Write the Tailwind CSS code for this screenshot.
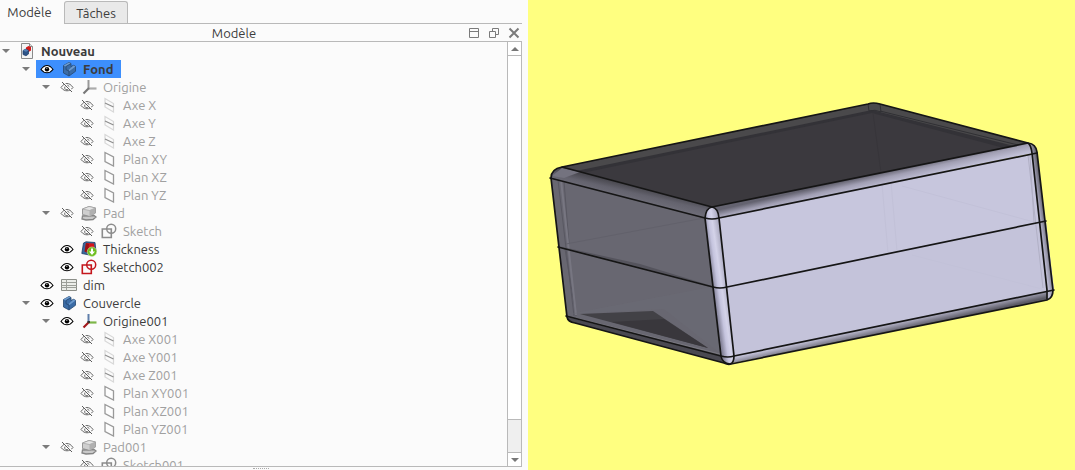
<!DOCTYPE html>
<html lang="fr">

<head>
  <meta charset="UTF-8">
  <meta name="viewport" content="width=device-width, initial-scale=1.0">
  <title>Modèle</title>
  <script src="https://cdn.jsdelivr.net/npm/@tailwindcss/browser@4"></script>
</head>

<body class="flex h-screen overflow-hidden bg-[#fbfbfb] font-['Ubuntu','Noto_Sans',sans-serif] text-[13px] leading-[18px] text-[#3c3c3c]">

  <!-- Icônes -->
  <svg class="hidden">
    <symbol id="eye" viewBox="0 0 14 12">
      <path d="M1 6.500C3 3.500 5 2.500 7 2.500s4 1 6 4C11 9 9 9.800 7 9.800S3 9 1 6.500z" fill="#fff" stroke="#000" stroke-width="1.100" />
      <circle cx="7" cy="6.200" r="2.200" fill="#000" />
      <path d="M6.200 5.300h1.200" stroke="#fff" stroke-width=".8" />
    </symbol>
    <symbol id="eye-off" viewBox="0 0 14 12">
      <path d="M1 6.500C3 3.500 5 2.500 7 2.500s4 1 6 4C11 9 9 9.800 7 9.800S3 9 1 6.500z" fill="none" stroke="#6a6a6a" />
      <path d="M5 5.500a2 2 0 0 0 3.500 2.300M7 4.200a2 2 0 0 1 2 2" fill="none" stroke="#6a6a6a" />
      <path d="M3 1l10 10" stroke="#fbfbfb" stroke-width="1.200" />
      <path d="M2 1l10 10" stroke="#5c5c5c" />
    </symbol>
    <symbol id="doc" viewBox="0 0 16 16">
      <path d="M2.500.5h8l3 3v12h-11z" fill="#f4f4f4" stroke="#8a8a8a" />
      <path d="M10.500.5v3h3" fill="#ddd" stroke="#8a8a8a" />
      <path d="M7 4.500l2.500-1.500 2.500 1v3.500l-2.500 1.500L7 7.500z" fill="#d21919" />
      <path d="M4 7.500L7 6l2.500 1.500V11L7 12.800 4 11.500z" fill="#2d5488" stroke="#1c3b66" stroke-width=".7" />
      <path d="M4 7.500l3 1.300 2.500-1.300L7 6z" fill="#5480b5" />
    </symbol>
    <symbol id="body" viewBox="0 0 16 16">
      <path d="M2.500 4.500L8 1.500l2 1v3l2.500-1.200 2 1v5L8 15l-5.500-3z" fill="#3b6ca6" stroke="#24466f" stroke-width=".8" />
      <path d="M2.500 4.500L8 1.500l2 1L5 5.500zM7.500 9l5-4.500 2 1L8.500 10z" fill="#6e9cce" />
      <path d="M5 5.500v3.200L8 10v5M5 5.500l5-3" fill="none" stroke="#24466f" stroke-width=".8" />
    </symbol>
    <symbol id="origin" viewBox="0 0 16 16">
      <path d="M7.500 1v8" stroke="#5f7fab" stroke-width="2" />
      <path d="M8 9.500h7.500" stroke="#7db648" stroke-width="2.200" />
      <path d="M8 9l-5.500 5.500" stroke="#a3181c" stroke-width="2.200" />
      <path d="M6.500 9h2.500" stroke="#333" stroke-width="2" />
    </symbol>
    <symbol id="origin-off" viewBox="0 0 16 16">
      <path d="M7.500 1v8" stroke="#999" stroke-width="2" />
      <path d="M8 9.500h7.500" stroke="#ababab" stroke-width="2.200" />
      <path d="M8 9l-5.500 5.500" stroke="#777" stroke-width="2.200" />
    </symbol>
    <symbol id="axis" viewBox="0 0 16 16">
      <path d="M4 1.500l8.500 5v8.500L4 10z" fill="none" stroke="#d8d8d8" stroke-width="1.200" />
      <path d="M4 6l8.500 4" stroke="#8c8c8c" stroke-width="1.200" />
    </symbol>
    <symbol id="plane" viewBox="0 0 16 16">
      <path d="M4 1.500l8.500 4.500v9L4 10.500z" fill="#fdfdfd" stroke="#999" stroke-width="1.300" />
    </symbol>
    <symbol id="pad" viewBox="0 0 16 16">
      <path d="M1.500 11L1 14l4 1 7-.5 3-2.500-2-1.500z" fill="#c9c9c9" stroke="#858585" stroke-width="1.300" />
      <path d="M1.500 4L8 1.500 14.500 3v5L8.500 11.500l-7-2z" fill="#cfcfcf" stroke="#8d8d8d" stroke-width=".9" />
      <path d="M1.500 4L8.500 5.500 14.500 3 8 1.500z" fill="#e4e4e4" stroke="#999" stroke-width=".6" />
      <path d="M8.500 5.500L14.500 3v5l-6 3.500z" fill="#b0b0b0" />
    </symbol>
    <symbol id="sketch" viewBox="0 0 16 16">
      <circle cx="10.200" cy="5.800" r="4.500" fill="none" stroke="currentColor" stroke-width="1.500" />
      <path d="M1.300 6h9v8.500h-9z" fill="none" stroke="currentColor" stroke-width="1.600" />
    </symbol>
    <symbol id="thickness" viewBox="0 0 16 16">
      <path d="M2.500 2L5 .8l9 .7 1 9-4 4L.8 12.500z" fill="#3a689e" stroke="#1d3c64" stroke-width=".8" />
      <path d="M5 2l8 .5 1 8H4z" fill="#d6151b" />
      <path d="M5 2l3 1-1 9-3.500-1.500z" fill="#9c1215" />
      <circle cx="11" cy="10.700" r="4.700" fill="#6cbe1d" stroke="#cbe8a8" stroke-width=".6" />
      <path d="M10 7.500h2v3h2L11 14l-3-3.500h2z" fill="#fff" />
    </symbol>
    <symbol id="sheet" viewBox="0 0 16 16">
      <path d="M.5 2.500h15v11H.5z" fill="#eceeea" stroke="#8b8e88" />
      <path d="M5.500 2.500v11M.5 5.500h15M.5 8.500h15M.5 10.500h15" stroke="#9c9f99" />
    </symbol>
  </svg>

  <!-- Panneau du modèle -->
  <aside class="flex w-[528px] shrink-0 flex-col pr-[6px]">

    <div role="tablist" class="flex h-6 shrink-0">
      <button role="tab" aria-selected="true" class="w-16 pr-[5px] text-center">Modèle</button>
      <div class="flex flex-1 items-end border-b border-[#b9b9b9]">
        <button role="tab" aria-selected="false" class="h-[22px] w-16 rounded-t-[3px] border border-b-0 border-[#b9b9b9] bg-[#e9e9e9]">Tâches</button>
      </div>
    </div>

    <header class="flex h-[17px] shrink-0 items-center">
      <h1 class="flex-1 text-center">Modèle</h1>
      <div class="flex gap-2 pr-[2px] text-[#7b7b7b]">
        <button aria-label="Réduire"><svg class="size-3" viewBox="0 0 12 12" fill="none" stroke="currentColor"><path d="M1.500 1.500h9v9h-9zM1.500 4.500h9" /></svg></button>
        <button aria-label="Détacher"><svg class="size-3" viewBox="0 0 12 12" fill="none" stroke="currentColor"><path d="M1.500 4.500h6v6h-6zM4.500 4.500v-3h6v6h-3" /></svg></button>
        <button aria-label="Fermer"><svg class="size-3" viewBox="0 0 12 12" fill="none" stroke="currentColor" stroke-width="2"><path d="M1.500 1.500l9 9M10.500 1.500l-9 9" /></svg></button>
      </div>
    </header>

    <div class="flex min-h-0 flex-1 border-y border-r border-[#b9b9b9]">
      <ul id="arbre" role="tree" class="flex-1 overflow-hidden"></ul>
      <!-- Barre de défilement -->
      <div class="flex w-[14px] flex-col border-l border-[#b9b9b9] bg-[#efefef]">
        <button aria-label="Monter" class="flex h-[14px] items-center justify-center border-b border-[#b9b9b9] bg-white"><svg class="h-1 w-2" viewBox="0 0 8 4"><path d="M0 4l4-4 4 4z" fill="#777" /></svg></button>
        <div class="flex-1 border-b border-[#b9b9b9] bg-white"></div>
        <div class="h-8"></div>
        <button aria-label="Descendre" class="flex h-[14px] items-center justify-center border-t border-[#b9b9b9] bg-white"><svg class="h-1 w-2" viewBox="0 0 8 4"><path d="M0 0h8L4 4z" fill="#777" /></svg></button>
      </div>
    </div>
    <div class="flex h-[3px] shrink-0 items-center justify-center">
      <div class="w-4 border-t border-dotted border-[#aaa]"></div>
    </div>
  </aside>

  <!-- Vue 3D -->
  <main class="min-w-0 flex-1 bg-[#ffff80]">
    <svg class="h-full w-full" viewBox="528 0 547 470" role="img" aria-label="Vue 3D">
      <defs>
        <linearGradient id="rim" gradientUnits="userSpaceOnUse" x1="870" y1="175" x2="873" y2="188">
          <stop offset="0" stop-color="#646370" /><stop offset=".45" stop-color="#a19fb3" /><stop offset="1" stop-color="#c0bfd6" />
        </linearGradient>
        <linearGradient id="rimLeft" gradientUnits="userSpaceOnUse" x1="637" y1="187" x2="634" y2="200">
          <stop offset="0" stop-color="#4a4950" /><stop offset=".5" stop-color="#64636e" /><stop offset="1" stop-color="#6d6c77" />
        </linearGradient>
        <linearGradient id="corner" gradientUnits="userSpaceOnUse" x1="713" y1="286" x2="727" y2="284">
          <stop offset="0" stop-color="#85849a" /><stop offset=".35" stop-color="#c5c4de" /><stop offset=".6" stop-color="#d4d3e9" /><stop offset="1" stop-color="#aeadc3" />
        </linearGradient>
        <linearGradient id="base" gradientUnits="userSpaceOnUse" x1="890" y1="323" x2="892" y2="332">
          <stop offset="0" stop-color="#c0bfd5" /><stop offset="1" stop-color="#5b5a65" />
        </linearGradient>
        <linearGradient id="side" gradientUnits="userSpaceOnUse" x1="1039" y1="222" x2="1046" y2="221">
          <stop offset="0" stop-color="#bbbad0" /><stop offset=".4" stop-color="#9c9baf" /><stop offset="1" stop-color="#5e5d68" />
        </linearGradient>
      </defs>

      <!-- Intérieur -->
      <path d="M562 167L868 104Q873 102 880 104L1028 143 712 208z" fill="#4a494b" />
      <path d="M576 171L872 110 1014 146 712 208z" fill="#333237" />
      <path d="M582 173L872 113 1004 148 712 208z" fill="#3b393e" />
      <path d="M873 113L881 173" stroke="#37353a" stroke-width="1" />
      <path d="M880 111L1018 145M868 104L869 111Q875 109 881 112L880 104" fill="none" stroke="#303034" stroke-width="1" />

      <!-- Face gauche -->
      <path d="M562 167Q550 169 551 178L567 317Q568 323 575 323L728 364 705 218 712 207z" fill="#686771" />
      <path d="M562 167Q552 169 551 178L705 218 712 207z" fill="url(#rimLeft)" />
      <path d="M562 168L580 172 564 178 552 176z" fill="#74737f" />
      <path d="M558 180L574 316M564 181L569 244M565 249L576 316" fill="none" stroke="#595862" stroke-width="1" />
      <path d="M561 180L576 315" fill="none" stroke="#777681" stroke-width="2" />
      <path d="M566 244L704 218" stroke="#62616b" stroke-width="1" />
      <path d="M558 246L640 264 712 286z" fill="#55545d" />
      <path d="M570 314L711 287 720 353 664 309z" fill="#6b6a74" opacity=".6" />
      <path d="M580 314L653 311 708 348z" fill="#424146" />
      <path d="M612 322L664 319 708 348z" fill="#39373c" />
      <path d="M567 317Q568 323 575 323L728 364 720 356z" fill="#4a4951" />
      <path d="M576 318L720 354" stroke="#78777f" stroke-width="1" />

      <!-- Face avant -->
      <path d="M719 218L1037 153 1054 290 734 356z" fill="#c7c6dd" />
      <path d="M727 287L1046 221 1054 290 734 356z" fill="#c4c3da" />
      <path d="M882 184L888 253M891 182L897 251M902 186L1034 222M912 255L1042 289" stroke="#c2c1d8" stroke-width="1" />
      <path d="M1028 155L1043 288M1030 155L1034 222" stroke="#b1b0c5" stroke-width="1" />
      <path d="M712 207L1028 143 1034 153 719 218z" fill="url(#rim)" />
      <path d="M734 356L1053 290Q1053 298 1047 300L728 364z" fill="url(#base)" />
      <path d="M1028 143Q1036 144 1037 152L1053 290Q1054 298 1047 299L1032 153z" fill="url(#side)" />
      <path d="M705 218Q706 208 712 207 718 208 719 218L734 356Q734 363 730 364 722 363 721 356z" fill="url(#corner)" />

      <!-- Arêtes -->
      <g fill="none" stroke="#151515" stroke-width="1.700" stroke-linecap="round" stroke-linejoin="round">
        <path d="M562 167L868 104Q873 102 880 104L1028 143Q1036 144 1037 152L1053 290Q1053 298 1047 300L731 364Q728 365 724 363L575 323Q568 322 567 317L551 178Q551 169 562 167z" />
        <path d="M562 167L712 207 1028 143Q1031 145 1032 153L1047 290V299" />
        <path d="M705 218Q706 208 712 207 718 208 719 218L734 356Q734 363 730 364 722 363 721 356z" />
        <path d="M550 178L705 218Q712 220 719 218L1037 153" />
        <path d="M558 247L713 287Q720 289 727 287L1046 221" />
        <path d="M566 316L721 356Q728 358 734 356L1054 290" />
      </g>
    </svg>
  </main>

  <script>
    // niveau, nom, icône, visibilité ('on', 'off' ou '' sans oeil), déplié, sélectionné
    const elements = [
      [0, 'Nouveau', 'doc', '', true],
      [1, 'Fond', 'body', 'on', true, true],
      [2, 'Origine', 'origin-off', 'off', true],
      [3, 'Axe X', 'axis', 'off'],
      [3, 'Axe Y', 'axis', 'off'],
      [3, 'Axe Z', 'axis', 'off'],
      [3, 'Plan XY', 'plane', 'off'],
      [3, 'Plan XZ', 'plane', 'off'],
      [3, 'Plan YZ', 'plane', 'off'],
      [2, 'Pad', 'pad', 'off', true],
      [3, 'Sketch', 'sketch', 'off'],
      [2, 'Thickness', 'thickness', 'on'],
      [2, 'Sketch002', 'sketch', 'on'],
      [1, 'dim', 'sheet', 'on'],
      [1, 'Couvercle', 'body', 'on', true],
      [2, 'Origine001', 'origin', 'on', true],
      [3, 'Axe X001', 'axis', 'off'],
      [3, 'Axe Y001', 'axis', 'off'],
      [3, 'Axe Z001', 'axis', 'off'],
      [3, 'Plan XY001', 'plane', 'off'],
      [3, 'Plan XZ001', 'plane', 'off'],
      [3, 'Plan YZ001', 'plane', 'off'],
      [2, 'Pad001', 'pad', 'off', true],
      [3, 'Sketch001', 'sketch', 'off']
    ];
    const marges = ['pl-0', 'pl-5', 'pl-10', 'pl-15'];

    document.getElementById('arbre').innerHTML = elements.map(([niveau, nom, icone, vue, deplie, choisi]) => {
      const fleche = deplie
        ? '<button aria-label="Replier" class="flex w-4 items-center pl-[2px]"><svg class="h-1 w-2" viewBox="0 0 8 4"><path d="M0 0h8L4 4z" fill="#7b7b7b"/></svg></button>'
        : '<span class="w-4"></span>';
      const oeil = vue
        ? `<span class="flex w-[22px] justify-center"><svg class="h-3 w-[14px]"><use href="#${vue === 'on' ? 'eye' : 'eye-off'}"/></svg></span>`
        : '';
      const couleur = vue === 'off' ? 'text-[#a0a0a0]' : 'text-[#3c3c3c]';
      const trait = vue === 'off' ? 'text-[#8c8c8c]' : 'text-[#c4161c]';
      const gras = niveau === 0 || choisi ? 'font-bold' : '';
      return `<li role="treeitem" class="flex h-[18px] ${marges[niveau]}">${fleche}
        <div class="flex items-center pr-2 ${choisi ? 'bg-[#3d8ffd]' : ''}">${oeil}
          <span class="flex w-[22px] justify-center ${trait}"><svg class="size-4"><use href="#${icone}"/></svg></span>
          <span class="pl-[3px] whitespace-nowrap ${couleur} ${gras}">${nom}</span>
        </div></li>`;
    }).join('');
  </script>
</body>

</html>
